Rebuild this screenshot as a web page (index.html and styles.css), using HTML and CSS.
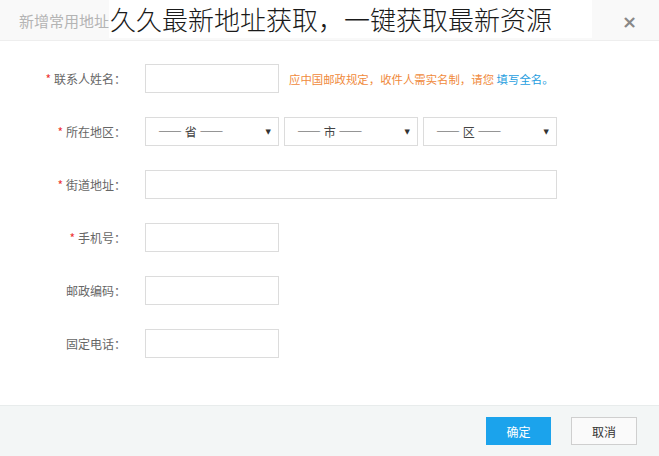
FILE: index.html
```html
<!DOCTYPE html>
<html lang="zh">
<head>
<meta charset="utf-8">
<title>新增常用地址</title>
<link rel="stylesheet" href="styles.css">
</head>
<body>
<div class="dialog">
  <div class="header">
    <span class="title">新增常用地址</span>
    <span class="overlay">久久最新地址获取，一键获取最新资源</span>
    <span class="close">×</span>
  </div>
  <div class="form">
    <div class="row">
      <label class="label"><i>*</i>联系人姓名：</label>
      <div class="input short"></div>
      <span class="hint">应中国邮政规定，收件人需实名制，请您 <b>填写全名。</b></span>
    </div>
    <div class="row">
      <label class="label"><i>*</i>所在地区：</label>
      <div class="selects">
        <div class="select"><span>—— 省 ——</span><span class="arrow">▼</span></div>
        <div class="select"><span>—— 市 ——</span><span class="arrow">▼</span></div>
        <div class="select"><span>—— 区 ——</span><span class="arrow">▼</span></div>
      </div>
    </div>
    <div class="row">
      <label class="label"><i>*</i>街道地址：</label>
      <div class="input long"></div>
    </div>
    <div class="row">
      <label class="label"><i>*</i>手机号：</label>
      <div class="input short"></div>
    </div>
    <div class="row">
      <label class="label">邮政编码：</label>
      <div class="input short"></div>
    </div>
    <div class="row">
      <label class="label">固定电话：</label>
      <div class="input short"></div>
    </div>
  </div>
  <div class="footer">
    <button class="btn primary">确定</button>
    <button class="btn">取消</button>
  </div>
</div>
</body>
</html>
```
FILE: styles.css
```css
html, body {
  margin: 0;
  padding: 0;
  background: #fff;
}
.dialog {
  width: 659px;
  height: 456px;
  display: flex;
  flex-direction: column;
  font-family: "Noto Sans CJK SC", "Noto Sans", sans-serif;
  position: relative;
  overflow: hidden;
}
.header {
  height: 40px;
  border-bottom: 1px solid #eeeeee;
  background: #f9f9f9;
  display: flex;
  align-items: center;
  padding-left: 19px;
  position: relative;
  flex: none;
}
.title {
  font-size: 15px;
  color: #b4b4b4;
  margin-top: 1px;
}
.overlay {
  position: absolute;
  left: 109px;
  top: 0;
  font-size: 26px;
  font-weight: 300;
  line-height: 38px;
  color: #1a1a1a;
  background: #fff;
  padding-right: 40px;
  padding-left: 1px;
}
.close {
  position: absolute;
  right: 22px;
  top: 11px;
  font-size: 18px;
  line-height: 22px;
  font-weight: bold;
  color: #888;
  font-family: "DejaVu Sans", sans-serif;
}
.form {
  padding-top: 23px;
  display: flex;
  flex-direction: column;
  gap: 24px;
  flex: 1;
}
.row {
  display: flex;
  align-items: center;
  height: 29px;
}
.label {
  width: 126px;
  margin-right: 19px;
  text-align: right;
  font-size: 12px;
  color: #666;
  flex: none;
}
.label i {
  font-style: normal;
  color: #e33;
  margin-right: 3px;
}
.input {
  height: 27px;
  border: 1px solid #dcdcdc;
  background: #fff;
  box-sizing: content-box;
  flex: none;
}
.short { width: 132px; }
.long { width: 410px; }
.hint {
  margin-left: 10px;
  font-size: 11.4px;
  color: #f08a3c;
  white-space: nowrap;
}
.hint b {
  font-weight: normal;
  color: #1f9ee0;
}
.selects {
  display: flex;
  gap: 5px;
}
.select {
  height: 27px;
  border: 1px solid #dcdcdc;
  display: flex;
  align-items: center;
  justify-content: space-between;
  padding: 0 7px 0 12px;
  box-sizing: content-box;
  width: 113px;
  font-size: 12px;
  color: #444;
}
.arrow {
  font-size: 7px;
  color: #333;
  font-family: "DejaVu Sans", sans-serif;
}
.footer {
  height: 50px;
  border-top: 1px solid #e8ecec;
  background: #f3f6f6;
  display: flex;
  justify-content: flex-end;
  align-items: center;
  gap: 20px;
  padding-right: 22px;
  flex: none;
}
.btn {
  width: 66px;
  height: 28px;
  font-family: "Noto Sans CJK SC", sans-serif;
  font-size: 12px;
  border: 1px solid #cfcfcf;
  background: #fafafa;
  color: #333;
  padding: 0;
  margin: 0;
}
.btn.primary {
  width: 65px;
  background: #1ba3ec;
  border-color: #1ba3ec;
  color: #fff;
}
```
